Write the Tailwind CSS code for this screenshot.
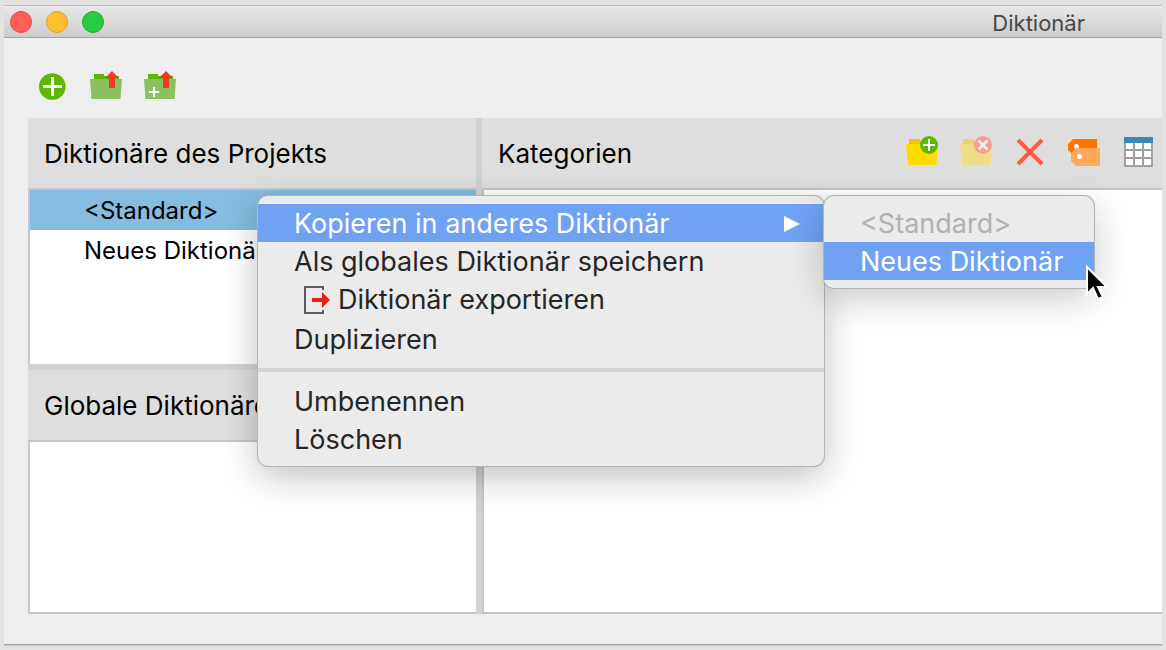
<!DOCTYPE html>
<html lang="de">
<head>
    <meta charset="UTF-8">
    <meta name="viewport" content="width=device-width, initial-scale=1.0">
    <title>Diktionär</title>
    <script src="https://cdn.jsdelivr.net/npm/@tailwindcss/browser@4"></script>
</head>
<body class="bg-[#e3e3e3] h-screen overflow-hidden px-1 pt-[5px] pb-[5px] font-['Inter',sans-serif] text-black">
    <div class="relative flex flex-col h-full bg-[#eeeeee] border-b border-[#a8a8a8] shadow-[0_1px_0_#c8c8c8]">

        <!-- title bar -->
        <header class="flex items-center shrink-0 h-[33px] pl-[6px] pr-[77px] bg-linear-to-b from-[#e8e8e8] to-[#cccccc] border-t border-b border-t-[#b8b8b8] border-b-[#a4a4a4] shadow-[inset_0_1px_0_#f4f4f4]">
            <div class="flex gap-[14px]">
                <button type="button" aria-label="Schließen" class="size-[22px] rounded-full bg-[#ff5f57] border border-[#e5473f]"></button>
                <button type="button" aria-label="Minimieren" class="size-[22px] rounded-full bg-[#ffbf2f] border border-[#e0a028]"></button>
                <button type="button" aria-label="Maximieren" class="size-[22px] rounded-full bg-[#28cb41] border border-[#1bad2b]"></button>
            </div>
            <h1 class="ml-auto pt-0.5 text-[22px] leading-7 text-[#484848]">Diktionär</h1>
        </header>

        <!-- toolbar -->
        <div class="flex items-center shrink-0 gap-[22px] h-20 pl-8 pt-4">
            <button type="button" aria-label="Neues Diktionär">
                <svg class="size-8" viewBox="0 0 32 32">
                    <circle cx="16.3" cy="16.5" r="13.3" fill="#5cb800"/>
                    <path d="M16.5 7v19M7 16.5h19" stroke="#fff" stroke-width="3"/>
                </svg>
            </button>
            <button type="button" aria-label="Diktionär importieren">
                <svg class="size-8" viewBox="0 0 32 32">
                    <path d="M4 4h10v2h15v4H4z" fill="#5cb800"/>
                    <path d="M0 9h32l-1.500 20h-29z" fill="#8bc060"/>
                    <path d="M22 1l7 7h-4v10h-6V8h-4z" fill="#f23a20"/>
                </svg>
            </button>
            <button type="button" aria-label="Kategorien importieren">
                <svg class="size-8" viewBox="0 0 32 32">
                    <path d="M4 4h10v2h15v4H4z" fill="#5cb800"/>
                    <path d="M0 9h32l-1.500 20h-29z" fill="#8bc060"/>
                    <path d="M10 17v10M5 22h10" stroke="#fff" stroke-width="2"/>
                    <path d="M22 1l7 7h-4v10h-6V8h-4z" fill="#f23a20"/>
                </svg>
            </button>
        </div>

        <main class="flex flex-1 min-h-0 pl-6 pb-[30px]">
            <!-- left column -->
            <div class="flex flex-col w-[448px] shrink-0">
                <section class="flex flex-col h-[246px] shrink-0">
                    <h2 class="shrink-0 h-[70px] px-4 bg-[#dedede] text-[26px] leading-[72px]">Diktionäre des Projekts</h2>
                    <ul class="flex-1 bg-white border-t-2 border-l-2 border-[#c6c6c6] text-[24px]">
                        <li><button type="button" class="block w-full h-10 pl-[54px] pt-0.5 text-left bg-[#85bcdf]">&lt;Standard&gt;</button></li>
                        <li><button type="button" class="block w-full h-10 pl-[54px] pt-0.5 text-left">Neues Diktionär</button></li>
                    </ul>
                </section>
                <div class="shrink-0 h-[6px] bg-[#d2d2d2]"></div>
                <section class="flex flex-col flex-1">
                    <h2 class="shrink-0 h-[70px] px-4 bg-[#dedede] text-[26px] leading-[72px]">Globale Diktionäre</h2>
                    <div class="flex-1 bg-white border-t-2 border-l-2 border-b-2 border-[#c6c6c6]"></div>
                </section>
            </div>

            <div class="shrink-0 w-[6px] bg-[#d2d2d2]"></div>

            <!-- categories -->
            <section class="flex flex-col flex-1 min-w-0">
                <div class="flex items-center shrink-0 h-[70px] pl-4 pr-2 bg-[#dedede]">
                    <h2 class="h-[70px] text-[26px] leading-[72px]">Kategorien</h2>
                    <div class="flex items-center gap-[22px] ml-auto pb-1">
                        <button type="button" aria-label="Neue Kategorie">
                            <svg class="size-8" viewBox="0 0 32 32">
                                <path d="M3 4h11v2h15v4H3z" fill="#f6c200"/>
                                <path d="M0 9h32l-1.500 21H2z" fill="#ffdc00"/>
                                <circle cx="23" cy="10" r="9" fill="#5cb800"/>
                                <path d="M23 4v12M17 10h12" stroke="#fff" stroke-width="2"/>
                            </svg>
                        </button>
                        <button type="button" aria-label="Kategorie entfernen">
                            <svg class="size-8" viewBox="0 0 32 32">
                                <path d="M3 4h11v2h15v4H3z" fill="#ead36f"/>
                                <path d="M0 9h32l-1.500 21H2z" fill="#eedd88"/>
                                <circle cx="23" cy="10" r="9" fill="#f5a093"/>
                                <path d="M18.500 5.500l9 9M27.500 5.500l-9 9" stroke="#f2eeee" stroke-width="2.500"/>
                            </svg>
                        </button>
                        <button type="button" aria-label="Löschen">
                            <svg class="size-8" viewBox="0 0 32 32">
                                <path d="M4 5l24 24M28 5L4 29" stroke="#ff5a42" stroke-width="4"/>
                            </svg>
                        </button>
                        <button type="button" aria-label="Kategorien kopieren">
                            <svg class="size-8" viewBox="0 0 32 32">
                                <path d="M5 4h24v14H3l-3-3V9z" fill="#ff7300"/>
                                <circle cx="8.500" cy="11.500" r="2.500" fill="#fff"/>
                                <path d="M8 13h24v18H8l-5-5v-8z" fill="#ffa959"/>
                                <circle cx="11.500" cy="21.500" r="2.500" fill="#fff"/>
                            </svg>
                        </button>
                        <button type="button" aria-label="Tabelle">
                            <svg class="size-8" viewBox="0 0 32 32">
                                <path d="M2 2h29v30H2z" fill="#a0a0a0"/>
                                <path d="M2 2h29v6H2z" fill="#3a87b5"/>
                                <path d="M4 8h7v6H4zM13 8h7v6h-7zM22 8h7v6h-7zM4 16h7v6H4zM13 16h7v6h-7zM22 16h7v6h-7zM4 24h7v6H4zM13 24h7v6h-7zM22 24h7v6h-7z" fill="#fff"/>
                            </svg>
                        </button>
                    </div>
                </div>
                <div class="flex-1 bg-white border-t-2 border-l-2 border-b-2 border-[#c6c6c6]"></div>
            </section>
        </main>

        <!-- context menu -->
        <div role="menu" class="absolute left-[254px] top-[191px] w-[566px] flex flex-col py-2 rounded-[10px] bg-[#ebebeb] text-[27px] text-[#262626] shadow-[0_0_0_1px_#b4b4b4,0_10px_36px_rgba(0,0,0,0.26)]">
            <button type="button" role="menuitem" class="flex items-center justify-between h-[38px] pl-9 pr-6 pt-0.5 bg-[#70a2f4] text-white text-left">
                Kopieren in anderes Diktionär
                <svg class="w-4 h-[18px]" viewBox="0 0 16 18"><path d="M0 1l16 8L0 17z" fill="#fff"/></svg>
            </button>
            <button type="button" role="menuitem" class="flex items-center h-[38px] pl-9 pt-0.5">Als globales Diktionär speichern</button>
            <button type="button" role="menuitem" class="flex items-center h-10 pl-[46px] gap-2">
                <svg class="w-[26px] h-7" viewBox="0 0 26 28">
                    <path d="M19 4V1H1v26h18v-3" fill="none" stroke="#5c5c5c" stroke-width="2"/>
                    <path d="M8 12h10V6l8 8-8 8v-6H8z" fill="#e32013"/>
                </svg>
                Diktionär exportieren
            </button>
            <button type="button" role="menuitem" class="flex items-center h-[38px] pl-9 pt-0.5">Duplizieren</button>
            <hr class="my-[10px] h-1 border-0 bg-[#d5d5d5]">
            <button type="button" role="menuitem" class="flex items-center h-[38px] pl-9 pt-0.5">Umbenennen</button>
            <button type="button" role="menuitem" class="flex items-center h-[38px] pl-9 pt-0.5">Löschen</button>
        </div>

        <!-- submenu -->
        <div role="menu" class="absolute left-[820px] top-[191px] w-[270px] flex flex-col py-2 rounded-[10px] bg-[#ebebeb] text-[27px] shadow-[0_0_0_1px_#b4b4b4,0_10px_36px_rgba(0,0,0,0.22)]">
            <button type="button" role="menuitem" disabled class="flex items-center h-[38px] pl-9 pt-0.5 text-[#b1b1b1]">&lt;Standard&gt;</button>
            <button type="button" role="menuitem" class="flex items-center h-[38px] pl-9 pt-0.5 bg-[#70a2f4] text-white">Neues Diktionär</button>
        </div>

        <!-- mouse pointer -->
        <svg class="absolute left-[1081px] top-[259px] w-6 h-[38px]" viewBox="0 0 24 38">
            <path d="M2 3v27l6-6 5 11 5-2-5-10h9z" fill="#000" stroke="#fff" stroke-width="2"/>
        </svg>
    </div>
</body>
</html>
